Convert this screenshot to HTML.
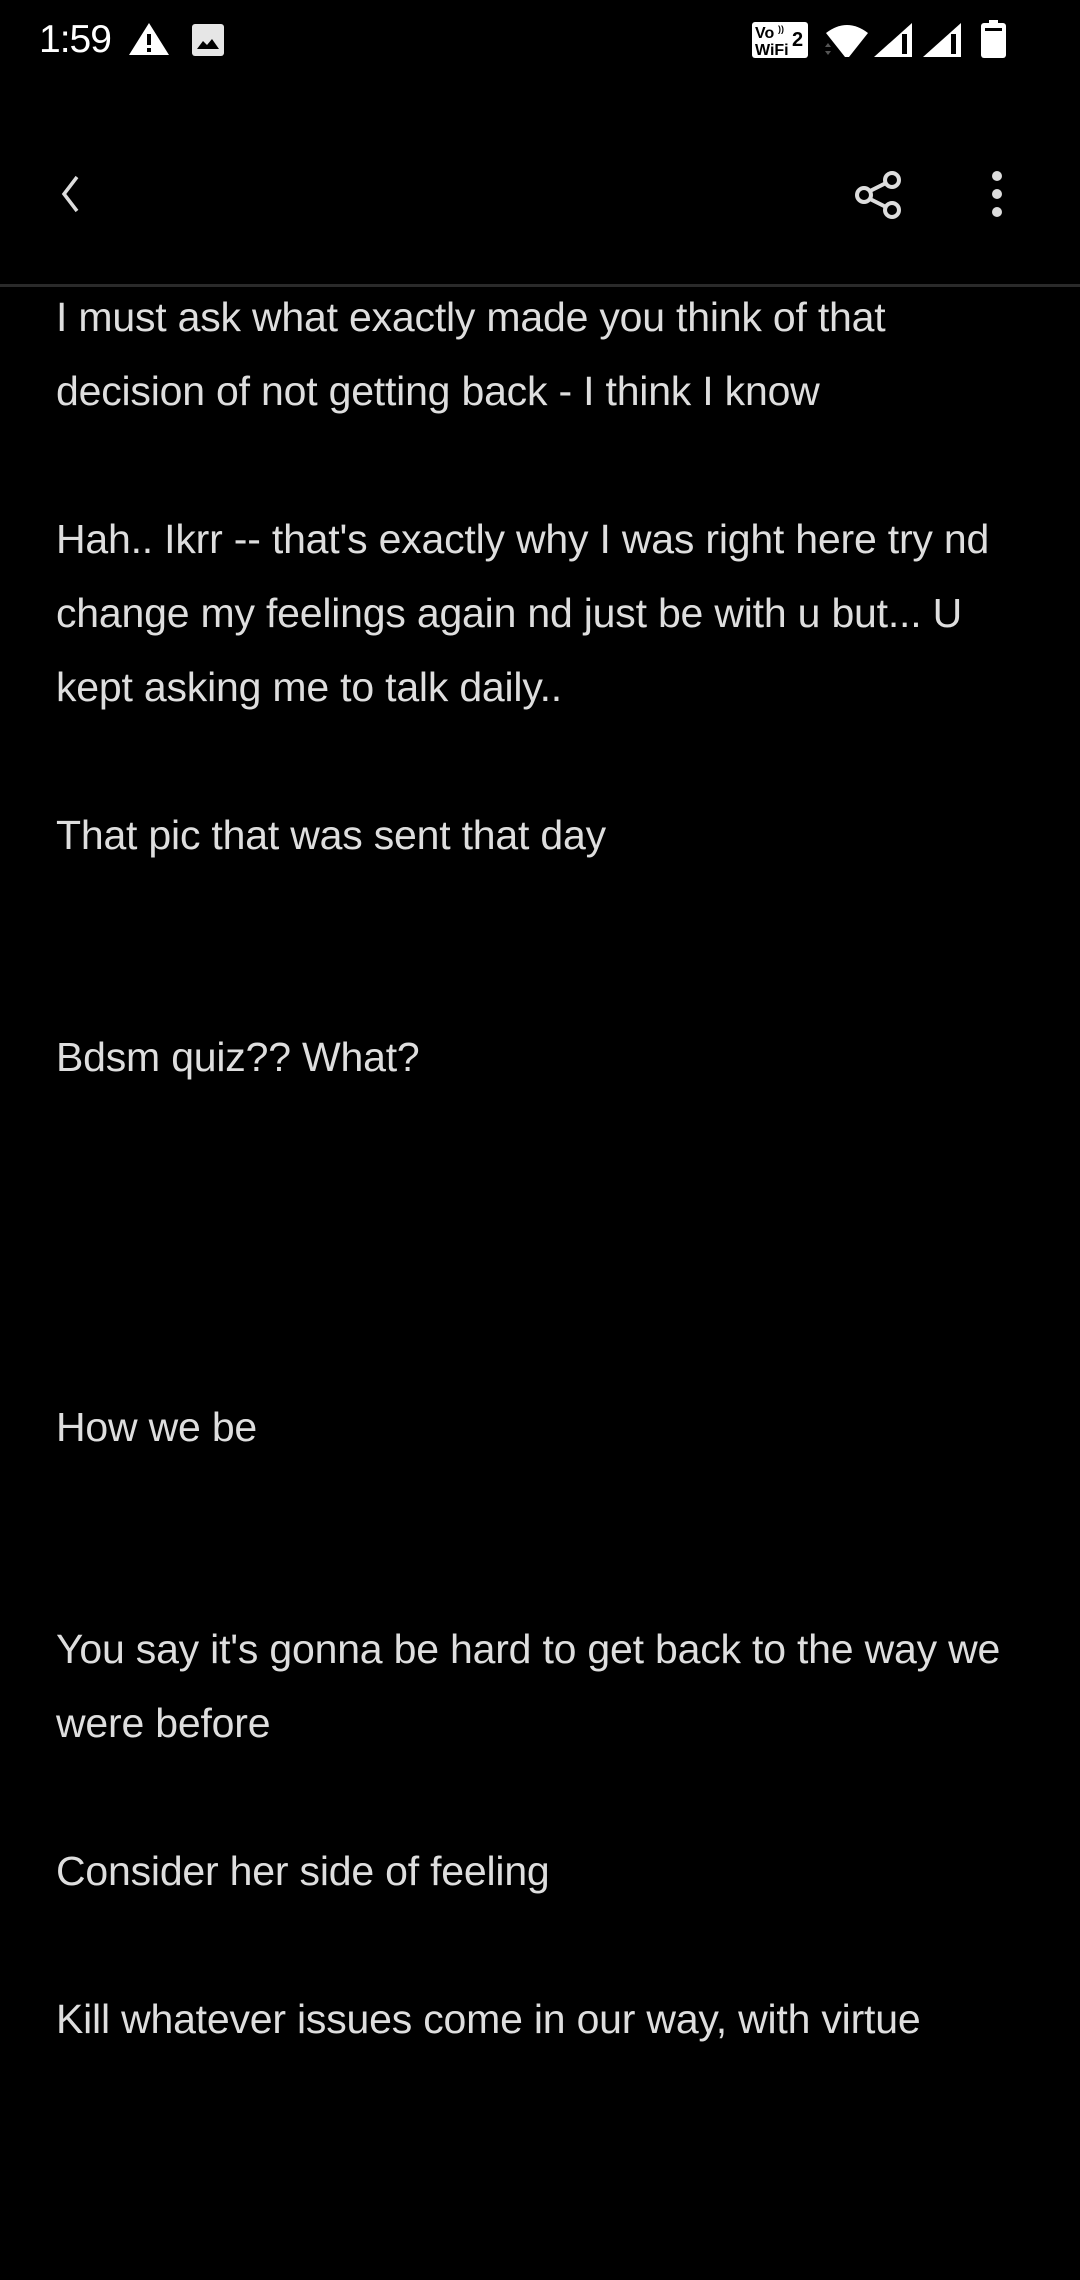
<!DOCTYPE html>
<html><head><meta charset="utf-8"><style>
html,body{margin:0;padding:0;background:#000;width:1080px;height:2280px;overflow:hidden}
body{position:relative;font-family:"Liberation Sans",sans-serif;color:#e0e0e0}
.t{position:absolute;left:56px;font-size:41px;line-height:74px;white-space:nowrap;letter-spacing:-0.2px;color:#dedede}
#hdr{position:absolute;left:0;top:0;width:1080px;height:284px;background:#000;z-index:2}
#div{position:absolute;left:0;top:284px;width:1080px;height:3px;background:#2a2a2a;z-index:2}
</style></head><body>
<div id="hdr">
<div style="position:absolute;left:39px;top:18px;font-size:39px;color:#fff;letter-spacing:-1px">1:59</div>
<svg style="position:absolute;left:128px;top:22px" width="42" height="34" viewBox="0 0 42 34"><path d="M21 1 L41 33 L1 33 Z" fill="#fff"/><rect x="19" y="12" width="4" height="11" fill="#000"/><rect x="19" y="26" width="4" height="4" fill="#000"/></svg>
<svg style="position:absolute;left:192px;top:24px" width="32" height="32" viewBox="0 0 32 32"><rect x="0" y="0" width="32" height="32" rx="3" fill="#e6e6e6"/><path d="M5 25 L11 17 L15 21 L20 15 L27 25 Z" fill="#000"/></svg>
<svg style="position:absolute;left:752px;top:22px" width="56" height="36" viewBox="0 0 56 36"><rect x="0" y="0" width="56" height="36" rx="3" fill="#fff"/><text x="3" y="16" font-size="16" font-weight="bold" fill="#000" font-family="Liberation Sans">Vo</text><text x="3" y="33" font-size="16" font-weight="bold" fill="#000" font-family="Liberation Sans">WiFi</text><text x="40" y="24" font-size="20" font-weight="bold" fill="#000" font-family="Liberation Sans">2</text><text x="26" y="10" font-size="9" font-weight="bold" fill="#000">))</text></svg>
<svg style="position:absolute;left:825px;top:23px" width="44" height="36" viewBox="0 0 44 36"><path d="M1 10 Q22 -6 43 10 L24 34 L20 34 Z" fill="#fff"/><path d="M0 24 L3 20 L6 24Z M0 28 L3 32 L6 28Z" fill="#555"/></svg>
<svg style="position:absolute;left:873px;top:22px" width="40" height="36" viewBox="0 0 40 36"><path d="M39 1 L39 35 L1 35 Z" fill="#fff"/><rect x="29" y="12" width="5" height="20" fill="#000"/></svg>
<svg style="position:absolute;left:922px;top:22px" width="40" height="36" viewBox="0 0 40 36"><path d="M39 1 L39 35 L1 35 Z" fill="#fff"/><rect x="29" y="12" width="5" height="20" fill="#000"/></svg>
<svg style="position:absolute;left:981px;top:20px" width="25" height="38" viewBox="0 0 25 38"><rect x="8" y="0" width="9" height="4" fill="#fff"/><rect x="0" y="3" width="25" height="35" rx="3" fill="#fff"/><rect x="4" y="8" width="17" height="3" fill="#000"/></svg>
<svg style="position:absolute;left:55px;top:172px" width="30" height="44" viewBox="0 0 30 44"><path d="M22 5 L9 22 L22 39" stroke="#ddd" stroke-width="3.5" fill="none"/></svg>
<svg style="position:absolute;left:852px;top:168px" width="54" height="54" viewBox="0 0 54 54"><circle cx="12" cy="27" r="7" stroke="#ddd" stroke-width="4" fill="none"/><circle cx="40" cy="12" r="7" stroke="#ddd" stroke-width="4" fill="none"/><circle cx="40" cy="42" r="7" stroke="#ddd" stroke-width="4" fill="none"/><path d="M18 23 L34 15 M18 31 L34 39" stroke="#ddd" stroke-width="4"/></svg>
<svg style="position:absolute;left:989px;top:170px" width="16" height="50" viewBox="0 0 16 50"><circle cx="8" cy="6" r="5" fill="#ddd"/><circle cx="8" cy="24" r="5" fill="#ddd"/><circle cx="8" cy="42" r="5" fill="#ddd"/></svg>
</div>
<div id="div"></div>
<div class="t" style="top:280px">I must ask what exactly made you think of that</div>
<div class="t" style="top:354px">decision of not getting back - I think I know</div>
<div class="t" style="top:502px">Hah.. Ikrr -- that's exactly why I was right here try nd</div>
<div class="t" style="top:576px">change my feelings again nd just be with u but... U</div>
<div class="t" style="top:650px">kept asking me to talk daily..</div>
<div class="t" style="top:798px">That pic that was sent that day</div>
<div class="t" style="top:1020px">Bdsm quiz?? What?</div>
<div class="t" style="top:1390px">How we be</div>
<div class="t" style="top:1612px">You say it's gonna be hard to get back to the way we</div>
<div class="t" style="top:1686px">were before</div>
<div class="t" style="top:1834px">Consider her side of feeling</div>
<div class="t" style="top:1982px">Kill whatever issues come in our way, with virtue</div>
</body></html>
